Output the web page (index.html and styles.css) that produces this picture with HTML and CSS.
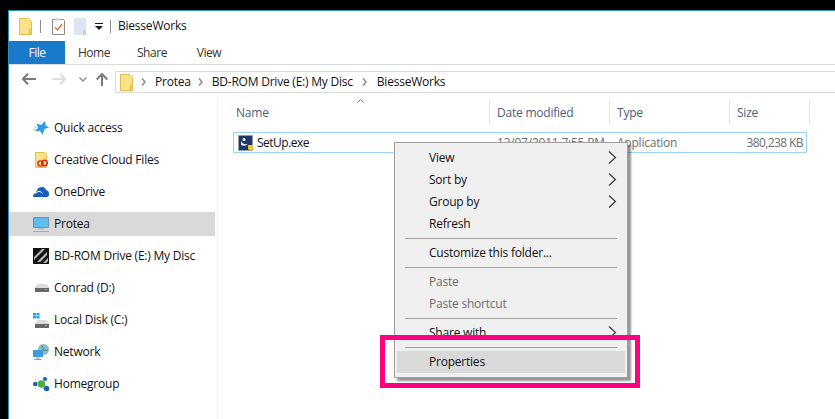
FILE: index.html
```html
<!DOCTYPE html>
<html lang="en">
<head>
<meta charset="utf-8">
<title>BiesseWorks</title>
<link rel="stylesheet" href="styles.css">
</head>
<body>
<div class="window">
  <header class="titlebar">
    <svg class="qa" width="13" height="17" viewBox="0 0 13 17"><path d="M.5.5h9l3 3v13H.5z" fill="#fde28a" stroke="#e3bd4e"/><path d="M10.500 11.500h2v5h-2z" fill="#f4d06a" stroke="#e3bd4e"/></svg>
    <span class="qsep"></span>
    <svg class="qa" width="13" height="17" viewBox="0 0 13 17"><path d="M.5 1.500h11l1 1v14H.5z" fill="#fff" stroke="#8a8a8a"/><path d="M3 .5h6v2H3z" fill="#c8c8c8"/><path d="M3 9.500l2.500 2.500L10 6" fill="none" stroke="#ea6a30" stroke-width="1.400"/></svg>
    <svg class="qa" width="12" height="17" viewBox="0 0 12 17"><path d="M0 0h12v17H0z" fill="#dbe5f3"/><path d="M9 12h3v5H9z" fill="#c3d2e8"/></svg>
    <svg class="qa" width="8" height="7" viewBox="0 0 8 7"><path d="M0 0h8v1H0zM0 3h8L4 7z" fill="#1a1a1a"/></svg>
    <span class="qsep qsep-end"></span>
    <span class="title">BiesseWorks</span>
  </header>
  <nav class="tabs">
    <span class="tab tab-file">File</span>
    <span class="tab">Home</span>
    <span class="tab">Share</span>
    <span class="tab tab-last">View</span>
  </nav>
  <div class="addressrow">
    <svg class="nav" width="14" height="12" viewBox="0 0 14 12"><path d="M6 .7L1 6l5 5.300M1.500 6H14" fill="none" stroke="#7c7c7c" stroke-width="2"/></svg>
    <svg class="nav" width="14" height="12" viewBox="0 0 14 12"><path d="M8 .7L13 6l-5 5.300M12.500 6H0" fill="none" stroke="#dcdcdc" stroke-width="2"/></svg>
    <svg class="nav" width="8" height="5" viewBox="0 0 8 5"><path d="M.5.5L4 4 7.500.5" fill="none" stroke="#8a8a8a" stroke-width="1.300"/></svg>
    <svg class="nav" width="12" height="13" viewBox="0 0 12 13"><path d="M.7 6.500L6 1l5.300 5.500M6 1.500V13" fill="none" stroke="#7c7c7c" stroke-width="2"/></svg>
    <div class="addressbox">
      <svg class="crumb-icon" width="13" height="17" viewBox="0 0 13 17"><path d="M.5.5h9l3 3v13H.5z" fill="#fde28a" stroke="#e3bd4e"/><path d="M10.500 11.500h2v5h-2z" fill="#f4d06a" stroke="#e3bd4e"/></svg>
      <svg class="crumb-sep" width="5" height="8" viewBox="0 0 5 8"><path d="M1 .5L4 4 1 7.500" fill="none" stroke="#8a8a8a" stroke-width="1.500"/></svg>
      <span class="crumb">Protea</span>
      <svg class="crumb-sep" width="5" height="8" viewBox="0 0 5 8"><path d="M1 .5L4 4 1 7.500" fill="none" stroke="#8a8a8a" stroke-width="1.500"/></svg>
      <span class="crumb crumb-wide">BD-ROM Drive (E:) My Disc</span>
      <svg class="crumb-sep crumb-sep-wide" width="5" height="8" viewBox="0 0 5 8"><path d="M1 .5L4 4 1 7.500" fill="none" stroke="#8a8a8a" stroke-width="1.500"/></svg>
      <span class="crumb">BiesseWorks</span>
    </div>
  </div>
  <div class="content">
    <aside class="sidebar">
      <div class="side-item">
        <svg class="side-icon" width="16" height="16" viewBox="0 0 16 16"><path d="M12 1l.5 4.500L16 7.500l-4.500 1.500L9.500 15 7 10.800l-5 .7 3-4-1.500-4L8 5z" fill="#2b9be8"/><path d="M1 7h3M0 9.500h3" stroke="#a8d4f2"/></svg>
        <span>Quick access</span>
      </div>
      <div class="side-item">
        <svg class="side-icon" width="16" height="16" viewBox="0 0 16 16"><path d="M2.500.5h9l2 2v13h-11z" fill="#fde28a" stroke="#e3bd4e"/><circle cx="7.500" cy="11.500" r="2.600" fill="none" stroke="#d8231f" stroke-width="1.400"/><circle cx="11.500" cy="11" r="2.800" fill="none" stroke="#d8231f" stroke-width="1.400"/></svg>
        <span>Creative Cloud Files</span>
      </div>
      <div class="side-item">
        <svg class="side-icon" width="16" height="14" viewBox="0 0 16 14"><path d="M0 12q0-3.500 3-4 1-6 6-6 3 0 4 3 3 .5 3 4 0 3-2 3H2q-2 0-2-0z" fill="#1a5cb8"/><path d="M3 8.500q1.500-3 4-2 1.500.5 2.500 2" fill="none" stroke="#fff"/></svg>
        <span>OneDrive</span>
      </div>
      <div class="side-item side-selected">
        <svg class="side-icon" width="16" height="15" viewBox="0 0 16 15"><path d="M.5.500h15v10H.5z" fill="#5fbdee" stroke="#6d90a8"/><path d="M5 11.500h6v1H5zM0 14h16v1H0z" fill="#9ab0c0"/></svg>
        <span>Protea</span>
      </div>
      <div class="side-item">
        <svg class="side-icon" width="16" height="16" viewBox="0 0 16 16"><path d="M0 0h16v16H0z" fill="#141414"/><path d="M1 9l8-8h3L1 12zM4 14L14 4v3l-7 7zM10 15l5-5v3l-2 2z" fill="#b5b5b5"/></svg>
        <span>BD-ROM Drive (E:) My Disc</span>
      </div>
      <div class="side-item">
        <svg class="side-icon" width="16" height="8" viewBox="0 0 16 8"><path d="M4.500 0h9L16 3v5H2V3z" fill="#dcdcdc"/><path d="M2 4h14v4H2z" fill="#686868"/><path d="M12 5h2v1h-2z" fill="#3fe04a"/></svg>
        <span>Conrad (D:)</span>
      </div>
      <div class="side-item">
        <svg class="side-icon" width="16" height="15" viewBox="0 0 16 15"><path d="M0 0h3v2.500H0zM3.500 0h3v2.500h-3zM0 3h3v2.500H0zM3.500 3h3v2.500h-3z" fill="#19a6ee"/><path d="M4.500 7h9L16 10v5H2v-5z" fill="#dcdcdc"/><path d="M2 11h14v4H2z" fill="#686868"/><path d="M12 12h2v1h-2z" fill="#3fe04a"/></svg>
        <span>Local Disk (C:)</span>
      </div>
      <div class="side-item">
        <svg class="side-icon" width="16" height="16" viewBox="0 0 16 16"><circle cx="10.500" cy="5.500" r="5.500" fill="#8fb7d8"/><path d="M8 1q3 2 2 5 3 1 5 0" fill="none" stroke="#4e8e58"/><path d="M0 6h10v7H0z" fill="#3e9ad8"/><path d="M3 13.500h4v1H3zM1.500 15h7v1h-7z" fill="#7fa0b8"/></svg>
        <span>Network</span>
      </div>
      <div class="side-item">
        <svg class="side-icon" width="16" height="15" viewBox="0 0 16 15"><circle cx="2.300" cy="7" r="2.300" fill="#1c62b0"/><circle cx="12" cy="2" r="2" fill="#1c62b0"/><circle cx="13.500" cy="11.500" r="2.800" fill="#1c62b0"/><circle cx="8.500" cy="7" r="3.800" fill="#4cae3e"/></svg>
        <span>Homegroup</span>
      </div>
    </aside>
    <main class="files">
      <svg class="sort-caret" width="7" height="4" viewBox="0 0 7 4"><path d="M.5 3.500l3-3 3 3" fill="none" stroke="#777"/></svg>
      <div class="columns">
        <span class="col col-name">Name</span>
        <span class="col">Date modified</span>
        <span class="col">Type</span>
        <span class="col">Size</span>
      </div>
      <div class="file-row">
        <span class="cell-name">
          <svg width="15" height="16" viewBox="0 0 15 16"><path d="M1 0h13q1 0 1 1v14q0 1-1 1H1q-1 0-1-1V1q0-1 1-1z" fill="#8f9bb0"/><path d="M1 1h13v14H1z" fill="#1e3868"/><path d="M3 6q2 4 7 3-3 3-7 1z" fill="#f2f5fa"/><circle cx="6" cy="4.500" r="1.500" fill="#f2f5fa"/><path d="M10 10h5v4l-2.500 2L10 14z" fill="#f2c230"/></svg>
          <span class="file-name">SetUp.exe</span>
        </span>
        <span class="cell">13/07/2011 7:55 PM</span>
        <span class="cell">Application</span>
        <span class="cell cell-size">380,238 KB</span>
      </div>
    </main>
  </div>
</div>

<ul class="menu">
  <li class="mi">View<svg class="arrow" width="9" height="13" viewBox="0 0 9 13"><path d="M1 .5l6.500 6-6.500 6" fill="none" stroke="#333" stroke-width="1.100"/></svg></li>
  <li class="mi">Sort by<svg class="arrow" width="9" height="13" viewBox="0 0 9 13"><path d="M1 .5l6.500 6-6.500 6" fill="none" stroke="#333" stroke-width="1.100"/></svg></li>
  <li class="mi">Group by<svg class="arrow" width="9" height="13" viewBox="0 0 9 13"><path d="M1 .5l6.500 6-6.500 6" fill="none" stroke="#333" stroke-width="1.100"/></svg></li>
  <li class="mi">Refresh</li>
  <li class="ms"></li>
  <li class="mi">Customize this folder...</li>
  <li class="ms"></li>
  <li class="mi mi-off">Paste</li>
  <li class="mi mi-off">Paste shortcut</li>
  <li class="ms"></li>
  <li class="mi">Share with<svg class="arrow" width="9" height="13" viewBox="0 0 9 13"><path d="M1 .5l6.500 6-6.500 6" fill="none" stroke="#333" stroke-width="1.100"/></svg></li>
  <li class="ms"></li>
  <li class="mi mi-hot">Properties</li>
</ul>
<div class="callout"></div>
</body>
</html>
```

FILE: styles.css
```css
* { box-sizing: border-box; }
html, body { margin: 0; height: 100%; }
body {
  background: #000;
  padding: 10px 0 0 8px;
  overflow: hidden;
  font: 12px/16px "Open Sans", "Noto Sans", sans-serif;
  letter-spacing: -0.22px;
  color: #1a1a1a;
}
.window {
  height: 409px;
  background: #fff;
  border-left: 1px solid #2b8fc0;
  border-top: 1px solid #2b8fc0;
  display: flex;
  flex-direction: column;
}
.titlebar {
  height: 30px;
  display: flex;
  align-items: center;
  padding-left: 10px;
}
.qa { margin-right: 9px; flex: none; }
.qsep { width: 1px; height: 13px; background: #8a8a8a; margin: 0 11px 0 -1px; flex: none; }
.qsep-end { margin: 0 7px 0 -2px; }
.title { color: #111; }
.tabs {
  height: 24px;
  display: flex;
  border-bottom: 1px solid #dadbdc;
}
.tab { width: 58px; padding-top: 4px; text-align: center; color: #333; letter-spacing: -0.45px; }
.tab-file { width: 56px; background: #1979ca; color: #fff; }
.tab-last { width: 56px; }
.addressrow {
  height: 28px;
  display: flex;
  align-items: center;
  padding-left: 13px;
}
.addressrow .nav { flex: none; margin-right: 16px; }
.addressrow .nav:nth-child(2) { margin-right: 13px; }
.addressrow .nav:nth-child(3) { margin-right: 10px; }
.addressrow .nav:nth-child(4) { margin-right: 7px; margin-left: -1px; }
.addressbox {
  flex: 1;
  height: 22px;
  margin-top: 6px;
  border: 1px solid #d9d9d9;
  border-right: 0;
  display: flex;
  align-items: center;
  padding-left: 4px;
  color: #111;
}
.crumb-icon { flex: none; margin-right: 8px; }
.crumb-sep { flex: none; margin-right: 9px; }
.crumb-sep-wide { margin-right: 10px; }
.crumb { margin-right: 7px; }
.crumb-wide { margin-right: 9px; }
.content { flex: 1; display: flex; min-height: 0; }
.sidebar {
  width: 209px;
  flex: none;
  padding-top: 17px;
  margin-top: 6px;
  border-right: 1px solid #f0f0f0;
}
.side-item {
  height: 24px;
  margin-bottom: 8px;
  display: flex;
  align-items: center;
  color: #111;
  margin-right: 2px;
}
.side-icon { flex: none; margin-left: 24px; }
.side-item span { margin-left: 5px; }
.side-selected { background: #d9d9d9; }
.files { flex: 1; padding: 7px 0 0 15px; position: relative; min-width: 0; }
.sort-caret { position: absolute; left: 139px; top: 6px; }
.columns {
  height: 25px;
  display: grid;
  grid-template-columns: 257px 120px 120px 80px;
  width: 578px;
}
.col {
  border-right: 1px solid #e5e5e5;
  padding-left: 7px;
  color: #4c607a;
  line-height: 25px;
}
.col-name { padding-left: 3px; }
.file-row {
  margin-top: 7px;
  width: 574px;
  height: 21px;
  border: 1px solid #99d1ff;
  display: grid;
  grid-template-columns: 256px 120px 120px 76px;
  align-items: center;
  color: #6d6d6d;
}
.cell-name { display: flex; align-items: center; gap: 4px; padding-left: 4px; color: #111; }
.file-name { letter-spacing: -0.5px; }
.cell { padding-left: 7px; }
.cell-size { text-align: right; padding: 0 3px 0 0; letter-spacing: -0.6px; }
.menu {
  position: absolute;
  left: 394px;
  top: 142px;
  width: 234px;
  height: 236px;
  margin: 0;
  padding: 4px 2px 0;
  list-style: none;
  background: #f0f0f0;
  border: 1px solid #a0a0a0;
  box-shadow: 3px 3px 2px rgba(0, 0, 0, 0.42);
  color: #111;
}
.mi {
  height: 22px;
  line-height: 22px;
  padding-left: 32px;
  position: relative;
}
.mi-off { color: #6d6d6d; }
.mi-hot { background: #d9d9d9; }
.arrow { position: absolute; right: 8px; top: 4px; }
.ms { height: 7px; margin: 0 8px; position: relative; }
.ms::after { content: ""; display: block; height: 1px; background: #a0a0a0; position: absolute; left: 0; right: 0; top: 3px; }
.callout {
  position: absolute;
  left: 380px;
  top: 335px;
  width: 260px;
  height: 53px;
  border: 5px solid #ff0080;
}
```
